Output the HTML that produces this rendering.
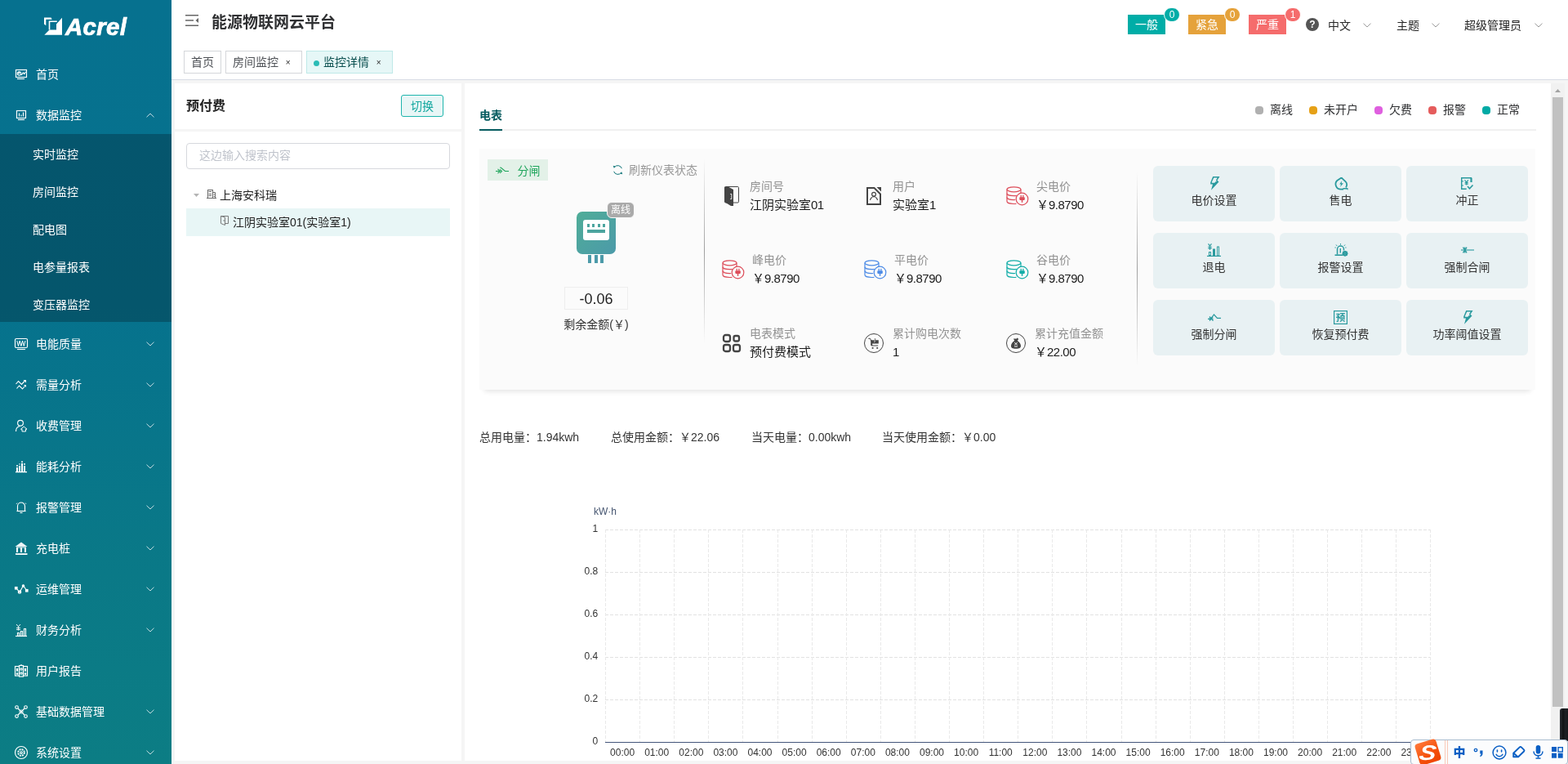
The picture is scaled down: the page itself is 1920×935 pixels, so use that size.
<!DOCTYPE html>
<html lang="zh-CN">
<head>
<meta charset="utf-8">
<title>能源物联网云平台</title>
<style>
*{box-sizing:border-box;margin:0;padding:0}
html,body{width:1920px;height:935px;overflow:hidden;background:#f5f5f5}
body{font-family:"Liberation Sans","Noto Sans CJK SC",sans-serif;font-size:14px;color:#333;position:relative}
#app{position:absolute;left:0;top:0;width:1920px;height:935px;overflow:hidden;will-change:transform}
.abs{position:absolute}
svg{display:block;overflow:visible}
i{font-style:normal}
#side{position:absolute;left:0;top:0;width:210px;height:935px;background:linear-gradient(180deg,#06718f 0%,#06728d 40%,#0a7987 75%,#0c7d84 100%);color:#fff;overflow:hidden}
#logo{position:absolute;left:0;top:0;width:210px;height:64px}
#logo .lg{position:absolute;left:54px;top:21px}
#logo .t{position:absolute;left:80px;top:16px;font:italic bold 29px/34px "Liberation Sans",sans-serif;color:#fff;letter-spacing:0.3px;-webkit-text-stroke:0.7px #fff;transform-origin:0 50%;transform:scaleX(1.015)}
.mi{position:absolute;left:0;width:210px;height:50px;line-height:50px;font-size:14px;color:#fff}
.mi .tx{position:absolute;left:44px;top:2px;white-space:nowrap}
.mi .ic{position:absolute;left:18px;top:19px;width:16px;height:16px}
.mi .ar{position:absolute;left:179px;top:24px;width:10px;height:6px}
#sub{position:absolute;left:0;top:164px;width:210px;height:230px;background:rgba(2,12,22,.27)}
.si{position:absolute;left:40px;height:46px;line-height:50px;font-size:14px;color:#fff;white-space:nowrap}
#head{position:absolute;left:210px;top:0;width:1710px;height:98px;background:#fff;border-bottom:1px solid #d8dce5}
#title{position:absolute;left:49px;top:13.5px;font-size:19px;line-height:28px;font-weight:bold;color:#303133;white-space:nowrap}
.tab{position:absolute;top:62px;height:28px;line-height:26px;border:1px solid #d4d6da;background:#fff;font-size:14px;color:#4e5156;white-space:nowrap}
.tab.on{background:#e6f7f7;border-color:#bfe9e8;color:#0a4f4f}
.tab .x{position:absolute;right:13.5px;top:1px;font-size:10px;color:#2a2a2a}
.tab .dot{position:absolute;left:8px;top:11px;width:7px;height:7px;border-radius:50%;background:#2bbcb6}
.hb{position:absolute;top:18px;height:24px;width:46px;line-height:25px;text-align:center;color:#fff;font-size:14px}
.hc{position:absolute;top:9px;width:20px;height:18px;border-radius:9px;border:1px solid #fff;color:#fff;font-size:12px;line-height:16px;text-align:center}
.ht{position:absolute;top:20px;line-height:22px;font-size:14px;color:#262626;white-space:nowrap}
.q{position:absolute;width:16px;height:16px;border-radius:50%;background:#555;color:#fff;font-size:12px;font-weight:bold;line-height:16px;text-align:center}
#lp{position:absolute;left:214px;top:102px;width:351px;height:829px;background:#fff}
.lph{position:absolute;left:14px;top:14px;font-size:16px;font-weight:bold;line-height:28px;color:#222}
.btn-sw{position:absolute;left:277px;top:14px;width:52px;height:27px;border:1px solid #1fb5ad;border-radius:3px;background:#e8f6f6;color:#16a8a0;font-size:14px;line-height:27px;text-align:center}
.lpd{position:absolute;left:0;top:56px;width:351px;height:3px;background:#f5f5f5}
.inp{position:absolute;left:14px;top:73px;width:323px;height:32px;border:1px solid #d6d8dd;border-radius:4px;color:#c0c4cc;font-size:14px;line-height:28px;padding-left:15px}
.tr{position:absolute;left:14px;width:323px;height:34px;line-height:36px;font-size:14px;color:#222}
.tr.sel{background:#e8f6f6;line-height:34px}
.tr span{position:absolute;top:0;white-space:nowrap}
#rp{position:absolute;left:569px;top:102px;width:1330px;height:829px;background:#fff;overflow:hidden}
#sb{position:absolute;left:1899px;top:102px;width:17px;height:829px;background:#f1f1f1}
#sb .th{position:absolute;left:2px;top:17px;width:13px;height:746px;background:#c1c1c1}
.etab{position:absolute;font-size:14px;font-weight:bold;color:#075c60;line-height:30px;white-space:nowrap}
.etl{position:absolute;width:1294px;height:2px;background:#f0f0f0}
.etu{position:absolute;width:28px;height:2px;background:#075c60}
.ld{position:absolute;width:10px;height:10px;border-radius:4px}
.lt{position:absolute;font-size:14px;line-height:24px;color:#303133;white-space:nowrap}
.card{position:absolute;width:1293px;height:295px;background:#fbfbfb;box-shadow:0 8px 6px -6px rgba(0,0,0,.11)}
.tag{position:absolute;width:74px;height:26px;background:#e3f1e8;color:#1ea55b;font-size:14px;line-height:28px}
.tag span{position:absolute;left:36.500px;top:-0.500px}
.rf{position:absolute;font-size:14px;line-height:26px;color:#999;white-space:nowrap}
.vd{position:absolute;width:1px;background:linear-gradient(180deg,rgba(150,150,150,0) 0%,rgba(150,150,150,.9) 50%,rgba(150,150,150,0) 100%)}
.meter{position:absolute;width:48px;height:52px;border-radius:7px;background:linear-gradient(135deg,#4fad98 0%,#4c9aa9 100%)}
.meter .scr{position:absolute;left:8px;top:10px;width:32px;height:25px;border-radius:3px;background:#fff}
.meter .scr i{position:absolute;top:5px;width:3px;height:4px;background:#4ca59f}
.meter .scr i:nth-child(1){left:5px}.meter .scr i:nth-child(2){left:11px}.meter .scr i:nth-child(3){left:18px}.meter .scr i:nth-child(4){left:24px}
.meter .scr b{position:absolute;left:5px;top:12px;width:22px;height:4px;background:#4ca59f}
.pins{position:absolute;width:20px;height:10px}
.pins i{position:absolute;top:0;width:4px;height:10px;background:#4c9aa9}
.pins i:nth-child(1){left:0}.pins i:nth-child(2){left:8px}.pins i:nth-child(3){left:15px}
.off{position:absolute;width:34px;height:20px;border:1px solid #fafafa;border-radius:6px;background:#aaa;color:#fff;font-size:12px;line-height:19px;text-align:center}
.val{position:absolute;width:78px;height:28px;border:1px solid #eee;font-size:18px;line-height:28px;text-align:center;color:#222}
.vlab{position:absolute;width:100px;text-align:center;font-size:14px;line-height:22px;color:#333;white-space:nowrap}
.ii{position:absolute}
.il{position:absolute;font-size:14px;line-height:22px;color:#929292;white-space:nowrap}
.iv{position:absolute;font-size:15px;line-height:22px;color:#1a1a1a;white-space:nowrap;margin-top:2px}
.n{letter-spacing:-0.5px}
.cj{font-family:"Noto Sans CJK JP","Noto Sans CJK SC",sans-serif}
.ab{position:absolute;width:149px;height:68px;border-radius:6px;background:#e8f1f3}
.abi{position:absolute}
.abt{position:absolute;left:0;top:30px;width:149px;text-align:center;font-size:14px;line-height:24px;color:#333;white-space:nowrap}
.st{position:absolute;font-size:14px;line-height:20px;color:#333;white-space:nowrap}
#blk{position:absolute;left:1910px;top:867px;width:14px;height:40px;border-radius:3px 0 0 0;background:linear-gradient(90deg,#2b2f36 0,#101214 4px,#1d2025 7px,#0c0d0f 100%)}
#ime{position:absolute;left:1727px;top:905px;width:193px;height:31px;border:1px solid #a9bccf;border-radius:4px;background:#fbfcfd}
#ime .s1,#ime .s2{position:absolute;top:0;width:1px;height:29px;background:#f9c9b8}
#ime .s1{left:41px}#ime .s2{left:44px}
#ime .zh{position:absolute;left:51.500px;top:5px;font-size:15px;font-weight:900;line-height:20px;color:#0a5fc4}
#sg{position:absolute;left:1735px;top:907px;width:27px;height:27px;border-radius:4px;background:linear-gradient(160deg,#ff7a3c 0%,#f4500b 60%,#ee4300 100%);transform:rotate(-17deg)}
#sg span{position:absolute;left:0;top:0;width:27px;height:27px;text-align:center;font:italic bold 27px/28px "Liberation Sans",sans-serif;color:#fff;transform:rotate(17deg) skewX(-8deg) scale(1.15,0.95)}
</style>
</head>
<body>
<div id="app">
<div id="side">
<div id="logo"><svg class="lg" width="22" height="22" viewBox="0 0 22 22"><path fill="#fff" d="M0 0.500h8.500l1.200 2.300H2.300v7.500L0 8.500z"/><path fill="#fff" d="M22 0.800v21H0.300l6.200-6.300H15V8.500z"/><path fill="none" stroke="#fff" stroke-width="1.600" d="M6.500 15.500V5.300h9.300"/></svg><div class="t">Acrel</div></div>
<div class="mi" style="top:64px"><svg class="ic" width="16" height="16" viewBox="0 0 16 16" ><g stroke="#fff" stroke-width="1.150" fill="none"><rect x="1.500" y="2.500" width="13" height="9"/><path d="M3 13.500h9"/><circle cx="5.500" cy="7" r="2.200"/><path d="M3.500 7h2v-2"/><path d="M8.300 9l2-3 1.500 1.500 1.700-2.800"/></g></svg><span class="tx">首页</span></div>
<div class="mi" style="top:114px"><svg class="ic" width="16" height="16" viewBox="0 0 16 16" ><g stroke="#fff" stroke-width="1.150" fill="none"><rect x="2.5" y="2.5" width="11" height="9"/><path d="M4 13.500h8"/><path d="M5.5 9.5v-4M8 9.5v-2M10.500 9.5v-5" /></g></svg><span class="tx">数据监控</span><svg class="ar" width="10" height="6" viewBox="0 0 10 6"><path d="M0.500 5.300l4.500-4.300 4.500 4.300" fill="none" stroke="#fff" stroke-opacity="0.75" stroke-width="1"/></svg></div>
<div id="sub">
<div class="si" style="top:0px">实时监控</div>
<div class="si" style="top:46px">房间监控</div>
<div class="si" style="top:92px">配电图</div>
<div class="si" style="top:138px">电参量报表</div>
<div class="si" style="top:184px">变压器监控</div>
</div>
<div class="mi" style="top:394px"><svg class="ic" width="16" height="16" viewBox="0 0 16 16" ><g stroke="#fff" stroke-width="1.150" fill="none"><rect x="0.500" y="1.500" width="15" height="11" rx="1.500"/><path d="M3 14.500h10"/><path d="M2.800 4l1.700 6.500 1.700-6.500 1.700 6.500 1.700-6.500 1.700 6.500 1.700-6.500" stroke-width="1"/></g></svg><span class="tx">电能质量</span><svg class="ar" width="10" height="6" viewBox="0 0 10 6"><path d="M0.500 0.700l4.500 4.300 4.500-4.300" fill="none" stroke="#fff" stroke-opacity="0.75" stroke-width="1"/></svg></div>
<div class="mi" style="top:444px"><svg class="ic" width="16" height="16" viewBox="0 0 16 16" ><g stroke="#fff" stroke-width="1.150" fill="none"><path d="M1.500 7l3-3.500 4 4 3.500-4"/><path d="M2.500 12.500l3-3.500 4 4 3-3.500"/><path d="M10.500 2h3.500v3.500z" fill="#fff" stroke="none"/><path d="M11 8h3v3z" fill="#fff" stroke="none"/></g></svg><span class="tx">需量分析</span><svg class="ar" width="10" height="6" viewBox="0 0 10 6"><path d="M0.500 0.700l4.500 4.300 4.500-4.300" fill="none" stroke="#fff" stroke-opacity="0.75" stroke-width="1"/></svg></div>
<div class="mi" style="top:494px"><svg class="ic" width="16" height="16" viewBox="0 0 16 16" ><g stroke="#fff" stroke-width="1.150" fill="none"><circle cx="7" cy="4.700" r="3.400"/><path d="M1.500 15c0-3.500 2-6 5-6.500"/><path d="M7.500 12.200l3.700-3.200 3.800 3.200h-1.500v2.800h-4.500v-2.800z" stroke-width="1"/></g></svg><span class="tx">收费管理</span><svg class="ar" width="10" height="6" viewBox="0 0 10 6"><path d="M0.500 0.700l4.500 4.300 4.500-4.300" fill="none" stroke="#fff" stroke-opacity="0.75" stroke-width="1"/></svg></div>
<div class="mi" style="top:544px"><svg class="ic" width="16" height="16" viewBox="0 0 16 16" ><g fill="#fff"><rect x="1" y="14" width="14" height="1.300"/><rect x="2" y="9" width="2" height="5"/><rect x="5" y="7" width="2" height="7"/><rect x="8" y="4" width="2" height="10"/><rect x="11" y="7" width="2" height="7"/><circle cx="3" cy="7" r="1"/><circle cx="9" cy="2.200" r="1"/><circle cx="12" cy="5" r="1"/><circle cx="6" cy="5" r="0.8"/></g></svg><span class="tx">能耗分析</span><svg class="ar" width="10" height="6" viewBox="0 0 10 6"><path d="M0.500 0.700l4.500 4.300 4.500-4.300" fill="none" stroke="#fff" stroke-opacity="0.75" stroke-width="1"/></svg></div>
<div class="mi" style="top:594px"><svg class="ic" width="16" height="16" viewBox="0 0 16 16" ><g stroke="#fff" stroke-width="1.150" fill="none"><path d="M3.500 12.500v-6a4.500 4.500 0 0 1 9 0v6"/><path d="M2.500 12.500h11"/><path d="M6.500 14.500h3"/><path d="M3 2.500l-1 1.500M13 2.500l1 1.500" stroke-width="0.8"/></g></svg><span class="tx">报警管理</span><svg class="ar" width="10" height="6" viewBox="0 0 10 6"><path d="M0.500 0.700l4.500 4.300 4.500-4.300" fill="none" stroke="#fff" stroke-opacity="0.75" stroke-width="1"/></svg></div>
<div class="mi" style="top:644px"><svg class="ic" width="16" height="16" viewBox="0 0 16 16" ><g fill="#fff"><path d="M8 0.500l7.500 5.500h-15z" opacity="0.92"/><rect x="2" y="7" width="2" height="6"/><rect x="7" y="7" width="2" height="6"/><rect x="12" y="7" width="2" height="6"/><rect x="2" y="6.500" width="12" height="1"/><rect x="1" y="14.200" width="14.500" height="1.800"/></g></svg><span class="tx">充电桩</span><svg class="ar" width="10" height="6" viewBox="0 0 10 6"><path d="M0.500 0.700l4.500 4.300 4.500-4.300" fill="none" stroke="#fff" stroke-opacity="0.75" stroke-width="1"/></svg></div>
<div class="mi" style="top:694px"><svg class="ic" width="16" height="16" viewBox="0 0 16 16" ><g stroke="#fff" stroke-width="1.150" fill="none"><rect x="0.500" y="5.500" width="2.500" height="2.500" fill="#fff"/><rect x="13.500" y="8.500" width="2.500" height="2.500" fill="#fff"/><path d="M2.500 7.500l3.500 4.500 4.500-8.500 4 6"/><circle cx="6" cy="11.500" r="1.700"/><circle cx="10.500" cy="4" r="1.200" fill="#fff"/></g></svg><span class="tx">运维管理</span><svg class="ar" width="10" height="6" viewBox="0 0 10 6"><path d="M0.500 0.700l4.500 4.300 4.500-4.300" fill="none" stroke="#fff" stroke-opacity="0.75" stroke-width="1"/></svg></div>
<div class="mi" style="top:744px"><svg class="ic" width="16" height="16" viewBox="0 0 16 16" ><g stroke="#fff" stroke-width="1.150" fill="none"><path d="M1 15.500h14"/><path d="M3.500 15v-3.500h2v3.500M7.500 15v-5.500h2v5.500M11.500 15v-8.500h2v8.500"/><path d="M2 1l2.500 3 2.500-3M4.500 4v4.500M2 5.500h5M2 7.500h5" stroke-width="0.9"/></g></svg><span class="tx">财务分析</span><svg class="ar" width="10" height="6" viewBox="0 0 10 6"><path d="M0.500 0.700l4.500 4.300 4.500-4.300" fill="none" stroke="#fff" stroke-opacity="0.75" stroke-width="1"/></svg></div>
<div class="mi" style="top:794px"><svg class="ic" width="16" height="16" viewBox="0 0 16 16" ><g stroke="#fff" stroke-width="1.150" fill="none"><rect x="0.500" y="2.500" width="5" height="11.500"/><rect x="5.500" y="1.500" width="5" height="13.500"/><rect x="10.500" y="2.500" width="5" height="11.500"/><path d="M8 0v1.500"/><rect x="2.500" y="5.500" width="1" height="2.500" fill="#fff"/><rect x="12.500" y="5.500" width="1" height="2.500" fill="#fff"/><circle cx="8" cy="6" r="1.200"/><circle cx="8" cy="11" r="1.200"/><circle cx="3" cy="11.500" r="0.800"/><circle cx="13" cy="11.500" r="0.800"/></g></svg><span class="tx">用户报告</span></div>
<div class="mi" style="top:844px"><svg class="ic" width="16" height="16" viewBox="0 0 16 16" ><g stroke="#fff" stroke-width="1.150" fill="none"><circle cx="2.500" cy="2.500" r="1.800"/><circle cx="13.500" cy="2.500" r="1.800"/><circle cx="2.500" cy="13.500" r="1.800"/><circle cx="13.500" cy="13.500" r="1.800"/><path d="M4 4l8 8M12 4l-8 8"/><path d="M8 5.500l2.500 2.500-2.500 2.500-2.500-2.500z" stroke-width="0.8"/></g></svg><span class="tx">基础数据管理</span><svg class="ar" width="10" height="6" viewBox="0 0 10 6"><path d="M0.500 0.700l4.500 4.300 4.500-4.300" fill="none" stroke="#fff" stroke-opacity="0.75" stroke-width="1"/></svg></div>
<div class="mi" style="top:894px"><svg class="ic" width="16" height="16" viewBox="0 0 16 16" ><g stroke="#fff" stroke-width="1.150" fill="none"><circle cx="8" cy="8" r="7.500"/><circle cx="8" cy="8" r="3.800" stroke-dasharray="2 1" stroke-width="1.800"/><circle cx="8" cy="8" r="1.300"/></g></svg><span class="tx">系统设置</span><svg class="ar" width="10" height="6" viewBox="0 0 10 6"><path d="M0.500 0.700l4.500 4.300 4.500-4.300" fill="none" stroke="#fff" stroke-opacity="0.75" stroke-width="1"/></svg></div>
</div>
<div id="head">
<svg class="abs" style="left:17px;top:18px" width="16" height="14" viewBox="0 0 16 14"><g fill="#666"><rect x="0" y="0" width="16" height="1.500"/><rect x="0" y="6.200" width="10" height="1.500"/><rect x="0" y="12.500" width="16" height="1.500"/><path d="M16 4v6l-3.500-3z"/></g></svg>
<div id="title">能源物联网云平台</div>
<div class="tab" style="left:15px;width:46px;text-align:center">首页</div>
<div class="tab" style="left:66px;width:94px;padding-left:8px">房间监控<span class="x">×</span></div>
<div class="tab on" style="left:165px;width:106px;padding-left:20px"><i class="dot"></i>监控详情<span class="x">×</span></div>
<div class="hb" style="left:1171px;background:#00ada7">一般</div><div class="hc" style="left:1215px;background:#00ada7">0</div>
<div class="hb" style="left:1245px;background:#e5a23b">紧急</div><div class="hc" style="left:1289px;background:#e5a23b">0</div>
<div class="hb" style="left:1319px;background:#f56c6c">严重</div><div class="hc" style="left:1363px;background:#f56c6c">1</div>
<div class="q" style="left:1389px;top:22px">?</div>
<div class="ht" style="left:1416px">中文</div><svg class="abs" style="left:1459px;top:28px" width="10" height="6" viewBox="0 0 10 6"><path d="M0.500 0.700l4.500 4.300 4.500-4.300" fill="none" stroke="#999" stroke-width="1"/></svg>
<div class="ht" style="left:1500px">主题</div><svg class="abs" style="left:1543px;top:28px" width="10" height="6" viewBox="0 0 10 6"><path d="M0.500 0.700l4.500 4.300 4.500-4.300" fill="none" stroke="#999" stroke-width="1"/></svg>
<div class="ht" style="left:1583px">超级管理员</div><svg class="abs" style="left:1669px;top:28px" width="10" height="6" viewBox="0 0 10 6"><path d="M0.500 0.700l4.500 4.300 4.500-4.300" fill="none" stroke="#999" stroke-width="1"/></svg>
</div>
<div id="lp">
<div class="lph">预付费</div>
<div class="btn-sw">切换</div>
<div class="lpd"></div>
<div class="inp">这边输入搜索内容</div>
<div class="tr" style="top:119px"><svg class="abs" style="left:9px;top:16px" width="7" height="4" viewBox="0 0 7 4"><path d="M0 0h7l-3.500 4z" fill="#b4b4b4"/></svg><svg class="abs" style="left:25px;top:11px" width="12" height="11" viewBox="0 0 12 11"><g fill="none" stroke="#6a6a6a" stroke-width="1"><rect x="1.500" y="0.500" width="6" height="10"/><path d="M7.500 3.500h3v7"/><path d="M0 10.500h12"/><path d="M2.500 2.500h3.500M2.500 5.500h3.500M2.500 7.500h3.500"/><path d="M8.500 6h1.500M8.500 8.500h1.500" stroke-width="0.900"/></g></svg><span style="left:41px">上海安科瑞</span></div>
<div class="tr sel" style="top:153px"><svg class="abs" style="left:42px;top:9px" width="10" height="12" viewBox="0 0 10 12"><g fill="none" stroke="#7a7a7a" stroke-width="1"><path d="M0.500 0.500h9v9h-3.500"/><path d="M0.500 0.500v9l5 2v-9.500z"/><path d="M4 5v2" stroke-width="0.900"/></g></svg><span style="left:57px">江阴实验室01(实验室1)</span></div>
</div>
<div id="rp">
<div class="etab" style="left:18px;top:24px">电表</div>
<div class="etl" style="left:18px;top:56px"></div><div class="etu" style="left:18px;top:56px"></div>
<i class="ld" style="left:968px;top:28px;background:#b0b0b0"></i><span class="lt" style="left:986px;top:20px">离线</span>
<i class="ld" style="left:1034px;top:28px;background:#e6a117"></i><span class="lt" style="left:1052px;top:20px">未开户</span>
<i class="ld" style="left:1114px;top:28px;background:#df5fdf"></i><span class="lt" style="left:1132px;top:20px">欠费</span>
<i class="ld" style="left:1180px;top:28px;background:#e55c5c"></i><span class="lt" style="left:1198px;top:20px">报警</span>
<i class="ld" style="left:1246px;top:28px;background:#00aaa5"></i><span class="lt" style="left:1264px;top:20px">正常</span>
<div class="card" style="left:18px;top:80px">
</div>
<div class="tag" style="left:28px;top:93px"><svg class="abs" style="left:10px;top:9px" width="16" height="9" viewBox="0 0 16 9"><g fill="none" stroke="#1ea55b" stroke-width="1.100"><path d="M0 5.500h4.500"/><path d="M5.200 1l1.300 0.300 5 4.200h4.500"/><path d="M2.500 2.800l3 2.700-3 2.700"/><path d="M5.200 3.300l2.300 2.200-2.300 2.500"/></g></svg><span>分闸</span></div>
<svg class="abs" style="left:181px;top:99px" width="13" height="14" viewBox="0 0 13 14"><g fill="none" stroke="#0d7377" stroke-width="1"><path d="M11.300 5.200a5 5 0 0 0-9-1.300"/><path d="M1.700 8.800a5 5 0 0 0 9 1.300"/></g><path d="M0.800 1.800l2.800 0.600-1.800 2.400z" fill="#0d7377"/><path d="M12.200 12.200l-2.800-0.600 1.800-2.400z" fill="#0d7377"/></svg>
<div class="rf" style="left:201px;top:93px">刷新仪表状态</div>
<div class="vd" style="left:293px;top:92px;height:226px"></div>
<div class="vd" style="left:823px;top:108px;height:238px"></div>
<div class="meter" style="left:137px;top:157px"><div class="scr"><i></i><i></i><i></i><i></i><b></b></div></div>
<div class="pins" style="left:151px;top:210px"><i></i><i></i><i></i></div>
<div class="off" style="left:174px;top:145px">离线</div>
<div class="val" style="left:122px;top:249px">-0.06</div>
<div class="vlab" style="left:111px;top:284px">剩余金额(￥)</div>
<div class="ii" style="left:318px;top:126.0px"><svg width="18" height="24" viewBox="0 0 18 24"><rect x="0.500" y="0.500" width="17" height="19.500" rx="1.200" fill="none" stroke="#444" stroke-width="1"/><path d="M0 0.800l4.500-0.300 6.500 3.500v20h-3l-8-5z" fill="#444"/><path d="M7.200 9.500h1.600v6h-1.600" fill="none" stroke="#fafafa" stroke-width="0.900"/></svg></div><div class="il" style="left:349px;top:115px">房间号</div><div class="iv" style="left:349px;top:136px">江阴实验室<span class="n">01</span></div>
<div class="ii" style="left:492px;top:127.0px"><svg width="18" height="22" viewBox="0 0 18 22"><path d="M1 1h8.500l7.500 7.500v12.500h-16z" fill="none" stroke="#444" stroke-width="2"/><path d="M12.500 0h5.500v5.500z" fill="#444"/><circle cx="9" cy="8.700" r="2.400" fill="none" stroke="#444" stroke-width="1.200"/><path d="M7.300 11.700h3.400" stroke="#444" stroke-width="1.200"/><path d="M4.500 16c.3-2.200 1.300-3.300 2.700-3.800M13.500 16c-.3-2.200-1.300-3.300-2.700-3.800" fill="none" stroke="#444" stroke-width="1.200"/></svg></div><div class="il" style="left:524px;top:115px">用户</div><div class="iv" style="left:524px;top:136px">实验室<span class="n">1</span></div>
<div class="ii" style="left:663px;top:126.0px"><svg width="28" height="24" viewBox="0 0 28 24"><g fill="none" stroke="#dd4d5a" stroke-width="1.200"><ellipse cx="9.500" cy="3.800" rx="8.500" ry="3"/><path d="M1 3.800v14.700c0 1.700 3.800 3 8.500 3 1 0 2-.1 2.900-.2"/><path d="M1 8.700c0 1.700 3.800 3 8.500 3 1.200 0 2.300-.1 3.300-.300"/><path d="M1 13.600c0 1.700 3.800 3 8.500 3 .6 0 1.200 0 1.800-.1"/><path d="M18 3.800v4.400"/><circle cx="19.500" cy="15.500" r="7.300"/></g><g fill="#dd4d5a"><rect x="17.600" y="10.800" width="1.300" height="3"/><rect x="20.200" y="10.800" width="1.300" height="3"/><rect x="16.300" y="13.300" width="6.500" height="3.600" rx="0.800"/><rect x="18.800" y="16.500" width="1.500" height="3.300"/></g></svg></div><div class="il" style="left:700px;top:115px">尖电价</div><div class="iv" style="left:700px;top:136px">￥<span class="n">9.8790</span></div>
<div class="ii" style="left:315px;top:216.0px"><svg width="28" height="24" viewBox="0 0 28 24"><g fill="none" stroke="#dd4d5a" stroke-width="1.200"><ellipse cx="9.500" cy="3.800" rx="8.500" ry="3"/><path d="M1 3.800v14.700c0 1.700 3.800 3 8.500 3 1 0 2-.1 2.900-.2"/><path d="M1 8.700c0 1.700 3.800 3 8.500 3 1.200 0 2.300-.1 3.300-.300"/><path d="M1 13.600c0 1.700 3.800 3 8.500 3 .6 0 1.200 0 1.800-.1"/><path d="M18 3.800v4.400"/><circle cx="19.500" cy="15.500" r="7.300"/></g><g fill="#dd4d5a"><rect x="17.600" y="10.800" width="1.300" height="3"/><rect x="20.200" y="10.800" width="1.300" height="3"/><rect x="16.300" y="13.300" width="6.500" height="3.600" rx="0.800"/><rect x="18.800" y="16.500" width="1.500" height="3.300"/></g></svg></div><div class="il" style="left:352px;top:205px">峰电价</div><div class="iv" style="left:352px;top:226px">￥<span class="n">9.8790</span></div>
<div class="ii" style="left:489px;top:216.0px"><svg width="28" height="24" viewBox="0 0 28 24"><g fill="none" stroke="#4d8be6" stroke-width="1.200"><ellipse cx="9.500" cy="3.800" rx="8.500" ry="3"/><path d="M1 3.800v14.700c0 1.700 3.800 3 8.500 3 1 0 2-.1 2.900-.2"/><path d="M1 8.700c0 1.700 3.800 3 8.500 3 1.200 0 2.300-.1 3.300-.300"/><path d="M1 13.600c0 1.700 3.800 3 8.500 3 .6 0 1.200 0 1.800-.1"/><path d="M18 3.800v4.400"/><circle cx="19.500" cy="15.500" r="7.300"/></g><g fill="#4d8be6"><rect x="17.600" y="10.800" width="1.300" height="3"/><rect x="20.200" y="10.800" width="1.300" height="3"/><rect x="16.300" y="13.300" width="6.500" height="3.600" rx="0.800"/><rect x="18.800" y="16.500" width="1.500" height="3.300"/></g></svg></div><div class="il" style="left:526px;top:205px">平电价</div><div class="iv" style="left:526px;top:226px">￥<span class="n">9.8790</span></div>
<div class="ii" style="left:663px;top:216.0px"><svg width="28" height="24" viewBox="0 0 28 24"><g fill="none" stroke="#12ada8" stroke-width="1.200"><ellipse cx="9.500" cy="3.800" rx="8.500" ry="3"/><path d="M1 3.800v14.700c0 1.700 3.800 3 8.500 3 1 0 2-.1 2.900-.2"/><path d="M1 8.700c0 1.700 3.800 3 8.500 3 1.200 0 2.300-.1 3.300-.300"/><path d="M1 13.600c0 1.700 3.800 3 8.500 3 .6 0 1.200 0 1.800-.1"/><path d="M18 3.800v4.400"/><circle cx="19.500" cy="15.500" r="7.300"/></g><g fill="#12ada8"><rect x="17.600" y="10.800" width="1.300" height="3"/><rect x="20.200" y="10.800" width="1.300" height="3"/><rect x="16.300" y="13.300" width="6.500" height="3.600" rx="0.800"/><rect x="18.800" y="16.500" width="1.500" height="3.300"/></g></svg></div><div class="il" style="left:700px;top:205px">谷电价</div><div class="iv" style="left:700px;top:226px">￥<span class="n">9.8790</span></div>
<div class="ii" style="left:316px;top:307.0px"><svg width="22" height="22" viewBox="0 0 22 22"><g fill="none" stroke="#444" stroke-width="2.300"><rect x="1" y="1" width="8" height="8" rx="2.500"/><rect x="13.500" y="2" width="6.500" height="6.500" rx="2"/><rect x="1" y="13" width="8" height="8" rx="2.500"/><rect x="13" y="13" width="8" height="8" rx="2.500"/></g></svg></div><div class="il" style="left:349px;top:295px">电表模式</div><div class="iv" style="left:349px;top:316px">预付费模式</div>
<div class="ii" style="left:489px;top:306.0px"><svg width="24" height="24" viewBox="0 0 24 24"><circle cx="12" cy="12" r="11.500" fill="none" stroke="#444" stroke-width="1"/><path d="M5.300 6.300h2.300l1.400 3.700" fill="none" stroke="#444" stroke-width="1"/><path d="M8.200 8.200h9.600v4.300h-7.600v1.900h7v1h-7.600c-.9 0-1.400-.5-1.400-1.400z" fill="#444"/><path d="M12.500 6.500h2l-1 1.700z" fill="#444"/><path d="M12.300 8.500l1.200 1.200-1.200 1.200" fill="none" stroke="#fafafa" stroke-width="0.900"/><rect x="9.700" y="17" width="1.800" height="1.800" fill="#444"/><rect x="15.300" y="17" width="1.800" height="1.800" fill="#444"/></svg></div><div class="il" style="left:524px;top:295px">累计购电次数</div><div class="iv" style="left:524px;top:316px">1</div>
<div class="ii" style="left:663px;top:306.0px"><svg width="24" height="24" viewBox="0 0 24 24"><circle cx="12" cy="12" r="11.500" fill="none" stroke="#444" stroke-width="1"/><path d="M9 6.500h4l.8-1.200 1.300 1.700-1.300 2c2.300 1.500 4.200 4 4.200 6.200 0 2.500-1.600 3.500-6 3.500s-6-1-6-3.500c0-2.200 1.900-4.700 4.200-6.200z" fill="#444"/><path d="M10.200 11.200l3.600 3M13.800 11.200l-3.600 3M10 16h4" fill="none" stroke="#fafafa" stroke-width="1"/></svg></div><div class="il" style="left:698px;top:295px">累计充值金额</div><div class="iv" style="left:698px;top:316px">￥<span class="n">22.00</span></div>
<div class="ab" style="left:843px;top:101px"><div class="abi" style="left:69.5px;top:13px"><svg width="12" height="17" viewBox="0 0 12 17"><path fill-rule="evenodd" d="M3.200 0h8.300l-3 4.700 2 1.800-9.500 10.200 2-7.200h-2.800v-2.300zM4.300 1.600l-2.400 5.200v.9h3.400l1.200-1.500 1.600-.3-1.300-1.100 1.900-3.200z" fill="#2a9a9e"/></svg></div><div class="abt">电价设置</div></div>
<div class="ab" style="left:998px;top:101px"><div class="abi" style="left:67.5px;top:13px"><svg width="16" height="17" viewBox="0 0 16 17"><path d="M7.500 1.400l5.200 5c1 1 1.500 2.200 1.500 3.600 0 1.300-.5 2.500-1.300 3.400M10 15.700h-3a6.300 6.300 0 0 1-4.700-10.700l5.200-3.600" fill="none" stroke="#2a9a9e" stroke-width="1.800" stroke-linejoin="round"/><path d="M8.200 5.300l-3 4.200h2l-1.300 3.500 4-4.700h-2.300z" fill="#2a9a9e"/><path d="M9.500 14h6v2.800l-1.500-1.300h-4.500z" fill="#2a9a9e"/></svg></div><div class="abt">售电</div></div>
<div class="ab" style="left:1153px;top:101px"><div class="abi" style="left:67px;top:13.5px"><svg width="15" height="15" viewBox="0 0 15 15"><g fill="none" stroke="#2a9a9e"><path d="M12.500 6V0.700H0.700v13.600h6" stroke-width="1.400"/><path d="M12.500 1v5" stroke-width="2"/><path d="M8 11l2.500 2.800 4-4.300" stroke-width="1.600"/><path d="M1 4.800h2M1 10h2" stroke-width="1"/><path d="M4.500 3.500l2.200 2.300 2.200-2.300M6.700 5.500v4M4.700 6.500h4M4.700 8.200h4" stroke-width="1.200"/></g></svg></div><div class="abt">冲正</div></div>
<div class="ab" style="left:843px;top:183px"><div class="abi" style="left:66px;top:13px"><svg width="17" height="16" viewBox="0 0 17 16"><g fill="#2a9a9e"><rect x="0" y="14.800" width="17" height="1.200"/><rect x="2" y="10" width="3" height="5"/><rect x="7" y="6.500" width="3" height="8.500"/><rect x="12" y="3.500" width="3" height="11.500"/></g><path d="M3 11h1v3h-1zM13 4.500h1v10h-1z" fill="#e8f1f3"/><path d="M1.500 0.300l2 2.500 2-2.500M3.500 2.800v5M1.300 4h4.400M1.300 5.800h4.400" fill="none" stroke="#2a9a9e" stroke-width="1.200"/></svg></div><div class="abt">退电</div></div>
<div class="ab" style="left:998px;top:183px"><div class="abi" style="left:66.5px;top:13px"><svg width="17" height="16" viewBox="0 0 17 16"><g fill="none" stroke="#2a9a9e"><path d="M3.500 13.500V7a4 4 0 0 1 8 0v1.500" stroke-width="1.500"/><path d="M0.500 14.200h9.500" stroke-width="1.600"/><path d="M7.500 0v1.600M2 1.500l1.200 1.500M13 1.500l-1.200 1.500M0.500 5h1.300M13.200 5h1.300" stroke-width="1"/><path d="M7.300 6v5.500" stroke-width="1.400"/></g><circle cx="13" cy="12.300" r="2.300" fill="none" stroke="#2a9a9e" stroke-width="2"/><path d="M13 8.800v7M9.500 12.300h7M10.500 9.800l5 5M15.500 9.800l-5 5" stroke="#2a9a9e" stroke-width="0.900"/></svg></div><div class="abt">报警设置</div></div>
<div class="ab" style="left:1153px;top:183px"><div class="abi" style="left:66.5px;top:17px"><svg width="16" height="8" viewBox="0 0 16 8"><g fill="none" stroke="#2a9a9e"><path d="M0 4h16" stroke-width="1.100"/><path d="M2.500 0.700l4.500 6.600M7 0.700l-4.500 6.600" stroke-width="1.500"/><path d="M4.800 0.500v7" stroke-width="1.200"/></g></svg></div><div class="abt">强制合闸</div></div>
<div class="ab" style="left:843px;top:265px"><div class="abi" style="left:66.5px;top:16.5px"><svg width="16" height="9" viewBox="0 0 16 9"><g fill="none" stroke="#2a9a9e"><path d="M0 6.300h3.500l4-5.300 4 4.300h4.500" stroke-width="1.200"/><path d="M2 3.500l4.500 5M6 3.500l-4 5" stroke-width="1.400"/><path d="M1.500 6h5" stroke-width="1.200"/></g></svg></div><div class="abt">强制分闸</div></div>
<div class="ab" style="left:998px;top:265px"><div class="abi" style="left:66px;top:12.5px"><svg width="17" height="17" viewBox="0 0 17 17"><rect x="0.600" y="0.600" width="15.800" height="15.800" fill="none" stroke="#2a9a9e" stroke-width="1.200"/><text x="8.500" y="12.800" text-anchor="middle" font-size="11.500" font-weight="bold" fill="#2a9a9e" font-family="'Liberation Sans','Noto Sans CJK SC',sans-serif">预</text></svg></div><div class="abt">恢复预付费</div></div>
<div class="ab" style="left:1153px;top:265px"><div class="abi" style="left:69.5px;top:13px"><svg width="12" height="17" viewBox="0 0 12 17"><path fill-rule="evenodd" d="M3.200 0h8.300l-3 4.700 2 1.800-9.500 10.200 2-7.200h-2.800v-2.300zM4.300 1.600l-2.400 5.200v.9h3.400l1.200-1.500 1.600-.3-1.300-1.100 1.900-3.200z" fill="#2a9a9e"/></svg></div><div class="abt">功率阈值设置</div></div>
<div class="st" style="left:18px;top:422px">总用电量<span class="cj">：</span>1.94kwh</div>
<div class="st" style="left:179px;top:422px">总使用金额<span class="cj">：</span>￥22.06</div>
<div class="st" style="left:351px;top:422px">当天电量<span class="cj">：</span>0.00kwh</div>
<div class="st" style="left:511px;top:422px">当天使用金额<span class="cj">：</span>￥0.00</div>
<svg class="abs" style="left:18px;top:498px" width="1293" height="331" viewBox="587 600 1293 331" font-family="'Liberation Sans','Noto Sans CJK SC',sans-serif" font-size="12"><g stroke="#e2e2e2" stroke-width="1" stroke-dasharray="4 2" fill="none"><path d="M741 648.5H1752"/><path d="M741 700.5H1752"/><path d="M741 752.5H1752"/><path d="M741 804.5H1752"/><path d="M741 856.5H1752"/></g><g stroke="#e9e9e9" stroke-width="1" stroke-dasharray="4 2" fill="none"><path d="M741.5 648V908"/><path d="M783.5 648V908"/><path d="M825.5 648V908"/><path d="M867.5 648V908"/><path d="M909.5 648V908"/><path d="M952.5 648V908"/><path d="M994.5 648V908"/><path d="M1036.5 648V908"/><path d="M1078.5 648V908"/><path d="M1120.5 648V908"/><path d="M1162.5 648V908"/><path d="M1204.5 648V908"/><path d="M1246.5 648V908"/><path d="M1288.5 648V908"/><path d="M1330.5 648V908"/><path d="M1373.5 648V908"/><path d="M1415.5 648V908"/><path d="M1457.5 648V908"/><path d="M1499.5 648V908"/><path d="M1541.5 648V908"/><path d="M1583.5 648V908"/><path d="M1625.5 648V908"/><path d="M1667.5 648V908"/><path d="M1709.5 648V908"/><path d="M1751.5 648V908"/></g><path d="M741 908.500H1752" stroke="#44557a" stroke-width="1" fill="none"/><text x="727" y="630" fill="#44546f">kW·h</text><g fill="#333" text-anchor="end"><text x="732.300" y="651">1</text><text x="732.300" y="703">0.8</text><text x="732.300" y="755">0.6</text><text x="732.300" y="807">0.4</text><text x="732.300" y="859">0.2</text><text x="732.300" y="911">0</text></g><g fill="#333" text-anchor="middle"><text x="762.1" y="925">00:00</text><text x="804.2" y="925">01:00</text><text x="846.3" y="925">02:00</text><text x="888.4" y="925">03:00</text><text x="930.5" y="925">04:00</text><text x="972.6" y="925">05:00</text><text x="1014.7" y="925">06:00</text><text x="1056.8" y="925">07:00</text><text x="1098.9" y="925">08:00</text><text x="1141.0" y="925">09:00</text><text x="1183.1" y="925">10:00</text><text x="1225.2" y="925">11:00</text><text x="1267.3" y="925">12:00</text><text x="1309.4" y="925">13:00</text><text x="1351.5" y="925">14:00</text><text x="1393.6" y="925">15:00</text><text x="1435.7" y="925">16:00</text><text x="1477.8" y="925">17:00</text><text x="1519.9" y="925">18:00</text><text x="1562.0" y="925">19:00</text><text x="1604.1" y="925">20:00</text><text x="1646.2" y="925">21:00</text><text x="1688.3" y="925">22:00</text><text x="1730.4" y="925">23:00</text></g></svg>
</div>
<div id="sb"><svg class="abs" style="left:5px;top:7px" width="7" height="4" viewBox="0 0 7 4"><path d="M0 4l3.500-4 3.500 4z" fill="#a3a3a3"/></svg><div class="th"></div></div>
<div id="blk"></div>
<div id="ime">
<i class="s1"></i><i class="s2"></i>
<span class="zh">中</span>
<svg class="abs" style="left:76px;top:9px" width="14" height="12" viewBox="0 0 14 12"><circle cx="3" cy="3" r="1.700" fill="none" stroke="#0a5fc4" stroke-width="1.300"/><path d="M8.300 3.600h3.200v3.600c0 1.800-1 3.200-2.900 3.900l-.6-1.100c1-.5 1.500-1.200 1.600-2.400H8.300z" fill="#0a5fc4"/></svg>
<svg class="abs" style="left:99px;top:6px" width="18" height="18" viewBox="0 0 18 18"><circle cx="9" cy="9" r="7.900" fill="none" stroke="#0a5fc4" stroke-width="1.500"/><rect x="5.600" y="5.200" width="1.600" height="3.600" rx="0.800" fill="#0a5fc4"/><rect x="10.800" y="5.200" width="1.600" height="3.600" rx="0.800" fill="#0a5fc4"/><path d="M4.800 10.800c1 2 2.500 2.900 4.200 2.900s3.200-.9 4.200-2.900" fill="none" stroke="#0a5fc4" stroke-width="1.400"/></svg>
<svg class="abs" style="left:124px;top:7px" width="16" height="15" viewBox="0 0 16 15"><g fill="none" stroke="#0a5fc4" stroke-width="1.900" stroke-linejoin="round"><path d="M1.200 13.300v-4.600l7.600-7.300c.6-.5 1.400-.5 2 0l3.300 3.200c.5.500.5 1.300 0 1.900l-7 6.800z"/><path d="M1.500 8.700l4.800 4.300"/></g></svg>
<svg class="abs" style="left:149px;top:6px" width="13" height="17" viewBox="0 0 13 17"><rect x="3.700" y="0" width="5.600" height="10.500" rx="2.800" fill="#0a5fc4"/><path d="M1 7.500c0 3.200 2.400 5.300 5.500 5.300s5.500-2.100 5.500-5.300" fill="none" stroke="#0a5fc4" stroke-width="1.500"/><rect x="5.700" y="12.500" width="1.600" height="3" fill="#0a5fc4"/><rect x="3.500" y="15.300" width="6" height="1.500" fill="#0a5fc4"/></svg>
<svg class="abs" style="left:172px;top:8px" width="14" height="14" viewBox="0 0 14 14"><rect x="0" y="0" width="6" height="6" fill="#0a5fc4"/><rect x="8" y="0.700" width="5.300" height="5.300" fill="none" stroke="#0a5fc4" stroke-width="1.400"/><rect x="0" y="7.700" width="6" height="6" fill="#0a5fc4"/><rect x="7.700" y="7.700" width="6" height="6" fill="#0a5fc4"/></svg>
</div>
<div id="sg"><span>S</span></div>
</div>
</body>
</html>
